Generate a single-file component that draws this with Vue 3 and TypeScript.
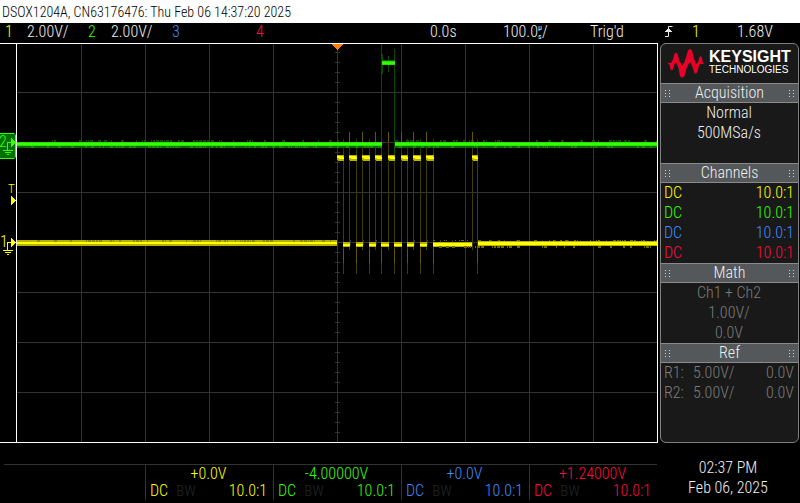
<script setup lang="ts">
interface Channel {
  id: number
  color: string
  offset: string
  probe: string
}

const channels: Channel[] = [
  { id: 1, color: 'yellow', offset: '+0.0V', probe: '10.0:1' },
  { id: 2, color: 'green', offset: '-4.00000V', probe: '10.0:1' },
  { id: 3, color: 'blue', offset: '+0.0V', probe: '10.0:1' },
  { id: 4, color: 'red', offset: '+1.24000V', probe: '10.0:1' },
]

const refs = [
  { name: 'R1:', scale: '5.00V/', offset: '0.0V' },
  { name: 'R2:', scale: '5.00V/', offset: '0.0V' },
]

// Graticule: 10 x 8 divisions, in screen pixels.
const columns = [81, 145, 209, 273, 337, 401, 465, 529, 593]
const rows = [49, 99, 149, 199, 249, 299, 349]
const verticalTicks = Array.from({ length: 39 }, (_, i) => 9 + i * 10)
const horizontalTicks = Array.from({ length: 49 }, (_, i) => Math.round(30 + i * 12.8))

// Channel 1: rising and falling edge of each pulse.
const pulses = [
  [337, 343], [349, 356], [362, 369], [375, 381], [388, 394],
  [401, 407], [413, 420], [426, 433], [472, 477],
]
const lows = pulses.slice(0, -2).map((p, i) => [p[1], pulses[i + 1][0]])

// Noise specks along the upper and lower side of a trace.
function specks(from: number, to: number, top: number, height: number, seed: number): string {
  let d = ''
  let s = seed
  for (let x = from; x < to;) {
    s = (s * 1103515245 + 12345) % 2147483648
    const w = 1 + (Math.floor(s / 65536) % 3)
    if (Math.floor(s / 1024) % 5 < 2) d += `M${x} ${top}h${Math.min(w, to - x)}v${height}h-${Math.min(w, to - x)}z`
    x += w + 1
  }
  return d
}
</script>

<template>
  <main class="scope">
    <header class="caption">DSOX1204A, CN63176476: Thu Feb 06 14:37:20 2025</header>

    <div class="status">
      <span class="yellow">1</span>
      <span>2.00V/</span>
      <span class="green">2</span>
      <span>2.00V/</span>
      <span class="blue">3</span>
      <span class="red">4</span>
      <span>0.0s</span>
      <span class="timebase">100.0<span class="micro"><span>µ</span><span>s</span></span>/</span>
      <span>Trig'd</span>
      <svg class="edge" viewBox="0 0 9 13" aria-label="Rising edge">
        <path d="M1 11.500h3.500v-10h4" fill="none" stroke="#e6e6e6" />
        <path d="M4 3h1v1h1v1h1v1h1v1H1V6h1V5h1V4h1z" fill="#e6e6e6" />
      </svg>
      <span class="yellow">1</span>
      <span class="level">1.68V</span>
    </div>

    <div class="body">
      <svg class="plot" viewBox="0 0 660 400" shape-rendering="crispEdges" role="img" aria-label="Waveforms">
        <g fill="#333333">
          <rect v-for="x in columns" :key="'c' + x" :x="x" y="1" width="1" height="398" />
          <rect v-for="y in rows" :key="'r' + y" x="17" :y="y" width="640" height="1" />
          <rect v-for="y in verticalTicks" :key="'v' + y" x="335" :y="y" width="5" height="1" />
          <rect v-for="x in horizontalTicks" :key="'h' + x" :x="x" y="197" width="1" height="5" />
        </g>

        <g fill="#403c00">
          <template v-for="p in pulses" :key="'e' + p[0]">
            <rect v-if="p[0] > 337" :x="p[0]" y="89" width="1" height="118" />
            <rect :x="p[1]" y="109" width="1" height="122" />
          </template>
        </g>
        <g fill="#5f5a00">
          <template v-for="p in pulses" :key="'f' + p[0]">
            <rect v-if="p[0] > 337" :x="p[0]" y="89" width="1" height="10" />
            <rect :x="p[1]" y="206" width="1" height="14" />
          </template>
        </g>

        <g fill="#0a4a00">
          <rect x="381" y="1" width="1" height="98" />
          <rect x="394" y="6" width="1" height="114" />
          <rect x="382" y="11" width="1" height="20" />
          <rect x="388" y="13" width="1" height="16" />
          <rect v-for="p in pulses" :key="'g' + p[1]" :x="p[1]" y="96" width="1" height="13" />
        </g>
        <path :d="specks(17, 382, 97, 2, 77)" fill="#0b4d00" />
        <path :d="specks(395, 657, 97, 2, 31)" fill="#0b4d00" />
        <rect x="17" y="103" width="365" height="2" fill="#126200" />
        <rect x="395" y="103" width="262" height="2" fill="#126200" />
        <path :d="specks(17, 382, 103, 2, 9)" fill="#1b8b00" />
        <path :d="specks(395, 657, 103, 2, 15)" fill="#1b8b00" />
        <g fill="#28e000">
          <rect x="17" y="99" width="365" height="4" />
          <rect x="395" y="99" width="262" height="4" />
          <rect x="382" y="17" width="13" height="2" fill="#126200" />
          <rect x="382" y="18" width="13" height="4" />
        </g>
        <g fill="#33ff00">
          <rect x="17" y="100" width="365" height="2" />
          <rect x="395" y="100" width="262" height="2" />
          <rect x="382" y="19" width="13" height="2" />
        </g>

        <g fill="#b8b000">
          <rect x="17" y="197" width="320" height="6" />
          <rect x="433" y="199" width="39" height="5" />
          <rect x="478" y="198" width="179" height="5" />
          <rect v-for="l in lows" :key="'l' + l[0]" :x="l[0]" y="199" :width="l[1] - l[0] + 1" height="5" />
          <rect v-for="p in pulses" :key="'p' + p[0]" :x="p[0]" y="112" :width="p[1] - p[0] + 1" height="5" />
          <rect v-for="p in pulses" :key="'q' + p[0]" :x="p[0] + 1" y="116" :width="p[1] - p[0]" height="2" />
        </g>
        <path :d="specks(17, 337, 197, 2, 53)" fill="#8f8900" />
        <path :d="specks(433, 657, 197, 1, 21)" fill="#6d6800" />
        <path :d="specks(433, 657, 203, 2, 63)" fill="#6d6800" />
        <g fill="#ffff00">
          <rect x="17" y="199" width="320" height="2" />
          <rect x="433" y="200" width="39" height="3" />
          <rect x="478" y="199" width="179" height="3" />
          <rect v-for="l in lows" :key="'m' + l[0]" :x="l[0]" y="201" :width="l[1] - l[0] + 1" height="2" />
          <rect v-for="p in pulses" :key="'s' + p[0]" :x="p[0]" y="113" :width="p[1] - p[0]" height="2" />
          <rect v-for="p in pulses" :key="'t' + p[0]" :x="p[0] + 2" y="114" :width="p[1] - p[0] - 1" height="2" />
        </g>

        <path d="M0 0h658v400H0v-1h16V1H0zM17 1v398h640V1z" fill="#ffffff" fill-rule="evenodd" />
        <path d="M332 1h11v1h-1v1h-1v1h-1v1h-1v1h-1v1h-1v-1h-1V5h-1V4h-1V3h-1V2h-1z" fill="#ff8000" />

        <path d="M0 90h14l2 2v22l-2 2H0z" fill="#007000" />
        <path d="M0 90.500h14M15.500 92v22M14 115.500H0" stroke="#33ff00" fill="none" />
        <path d="M7.500 107v-7.500H11M3 107.500h10M5 109.500h6M7 111.500h2" stroke="#33ff00" fill="none" />
        <path d="M11 95l5 4.500l-5 4.500z" fill="#33ff00" />
        <path d="M7.500 207v-7.500H11M3 207.500h10M5 209.500h6M7 211.500h2" stroke="#ffff00" fill="none" />
        <path d="M11 195l5 4.500l-5 4.500zM11 153l5 4.500l-5 4.500z" fill="#ffff00" />
        <text class="mark" x="-1" y="104" fill="#33ff00">2</text>
        <text class="mark" x="0" y="204" fill="#ffff00">1</text>
        <text class="mark small" x="8" y="150" fill="#ffff00">T</text>
      </svg>

      <aside class="panel">
        <div class="brand">
          <svg class="logo" viewBox="0 0 36 29" aria-hidden="true">
            <path
              fill="#e90029"
              d="M0 14L3 14L4.500 11.500L6.500 5Q8 2.500 9.500 5L11.500 12L14 16.500L16 14L18 8.500L19.800 2Q22 -2 24.200 2L26 10L27.800 15L30 13.500L31.300 8.500Q32.700 6 34 9L34.800 13.500L36 14L34.500 15L31.500 15L30.500 19L29.200 23Q27.500 26 26 23L24.500 18L22.500 13.500L20.500 15L18.500 19.500L16.500 27Q14.300 30 12 27L10.500 19L8 13.500L6.500 15L5 20Q3.700 22.500 2.300 20L1.500 15.500L0 15Z"
            />
          </svg>
          <div class="wordmark">
            <strong>KEYSIGHT</strong>
            <span>TECHNOLOGIES</span>
          </div>
        </div>

        <h2><i class="grip"></i>Acquisition<i class="grip"></i></h2>
        <div class="section acquisition">
          <p>Normal</p>
          <p>500MSa/s</p>
        </div>

        <h2><i class="grip"></i>Channels<i class="grip"></i></h2>
        <div class="section">
          <p v-for="c in channels" :key="c.id" class="pair" :class="c.color">
            <span>DC</span><span>{{ c.probe }}</span>
          </p>
        </div>

        <h2><i class="grip"></i>Math<i class="grip"></i></h2>
        <div class="section dim">
          <p>Ch1 + Ch2</p>
          <p>1.00V/</p>
          <p>0.0V</p>
        </div>

        <h2><i class="grip"></i>Ref<i class="grip"></i></h2>
        <div class="section dim">
          <p v-for="r in refs" :key="r.name" class="ref">
            <span>{{ r.name }}</span><span>{{ r.scale }}</span><span>{{ r.offset }}</span>
          </p>
        </div>
      </aside>
    </div>

    <footer class="bottom">
      <div class="summary">
        <div v-for="c in channels" :key="c.id" class="cell" :class="c.color">
          <p class="offset">{{ c.offset }}</p>
          <p class="coupling"><span>DC</span><span class="bw">BW</span><span class="probe">{{ c.probe }}</span></p>
        </div>
      </div>
      <div class="clock">
        <p>02:37 PM</p>
        <p>Feb 06, 2025</p>
      </div>
    </footer>
  </main>
</template>

<style>
body {
  background: #000000;
}
</style>

<style scoped>
.scope {
  min-height: 100vh;
  background: #000000;
  color: #f0f0f0;
  font-family: "Roboto Condensed", "Liberation Sans Narrow", "Liberation Sans", sans-serif;
  font-size: 16px;
  font-weight: 300;
  line-height: 20px;
  white-space: nowrap;
}
p,
h2 {
  margin: 0;
  font-size: 16px;
  font-weight: 300;
}
.yellow { color: #ffff00; }
.green { color: #33ff00; }
.blue { color: #3d8cff; }
.red { color: #ff0a3a; }

.caption {
  height: 23px;
  padding-left: 2px;
  background: #ffffff;
  color: #000000;
  font-size: 14px;
  line-height: 24px;
}
.status {
  display: grid;
  grid-template-columns: 22px 61px 23px 61px 84px 174px 73px 87px 74px 28px 45px 1fr;
  height: 20px;
  padding-left: 5px;
  line-height: 18px;
}
.timebase {
  display: flex;
}
.micro {
  display: flex;
  flex-direction: column;
  font-size: 8px;
  font-weight: 400;
  line-height: 9px;
}
.edge {
  width: 9px;
  height: 13px;
  margin-top: 2px;
}

.body {
  display: grid;
  grid-template-columns: 1fr 140px;
  align-items: start;
}
.plot {
  display: block;
  width: 100%;
}
.mark {
  font-size: 16px;
}
.small {
  font-size: 13px;
}

.panel {
  box-sizing: border-box;
  height: 100%;
  margin-right: 1px;
  border: 1px solid #808080;
  border-radius: 6px;
  background: #191919;
  overflow: hidden;
}
.brand {
  display: flex;
  gap: 5px;
  height: 39px;
  padding: 5px 0 0 7px;
  box-sizing: border-box;
}
.logo {
  width: 36px;
  height: 29px;
}
.wordmark {
  display: flex;
  flex-direction: column;
  color: #ffffff;
  font-family: "Liberation Sans", sans-serif;
}
.wordmark strong {
  font-size: 16px;
  font-weight: 700;
  line-height: 15px;
}
.wordmark span {
  font-size: 10px;
  font-weight: 400;
  line-height: 12px;
}
h2 {
  display: flex;
  align-items: center;
  justify-content: space-between;
  box-sizing: border-box;
  height: 20px;
  padding: 0 4px;
  border: solid #8a8a8a;
  border-width: 1px 0;
  background: #54585a;
  line-height: 18px;
}
.grip {
  width: 5px;
  height: 7px;
  background: repeating-linear-gradient(#54585a00 0 1px, #54585a 1px 3px), repeating-linear-gradient(90deg, #d0d0d0 0 1px, #54585a 1px 4px);
}
.section {
  padding: 0 4px 0 3px;
  text-align: center;
}
.acquisition {
  min-height: 60px;
}
.pair {
  display: flex;
  justify-content: space-between;
}
.dim {
  color: #7c7c7c;
}
.ref {
  display: grid;
  grid-template-columns: 29px 1fr auto;
  text-align: left;
}

.bottom {
  display: grid;
  grid-template-columns: 1fr 140px;
  padding-top: 15px;
}
.summary {
  display: grid;
  grid-template-columns: repeat(4, 1fr);
  margin: 6px 3px 0 4px;
  padding: 0 0 0 141px;
  border-top: 1px solid #333333;
}
.cell {
  height: 35px;
  padding: 0 6px 0 4px;
  border-left: 1px solid #333333;
  line-height: 17px;
}
.offset {
  text-align: center;
}
.coupling {
  display: flex;
  gap: 8px;
}
.bw {
  color: #262626;
  font-size: 15px;
  line-height: 18px;
}
.probe {
  margin-left: auto;
}
.clock {
  padding-right: 4px;
  text-align: center;
}
</style>
